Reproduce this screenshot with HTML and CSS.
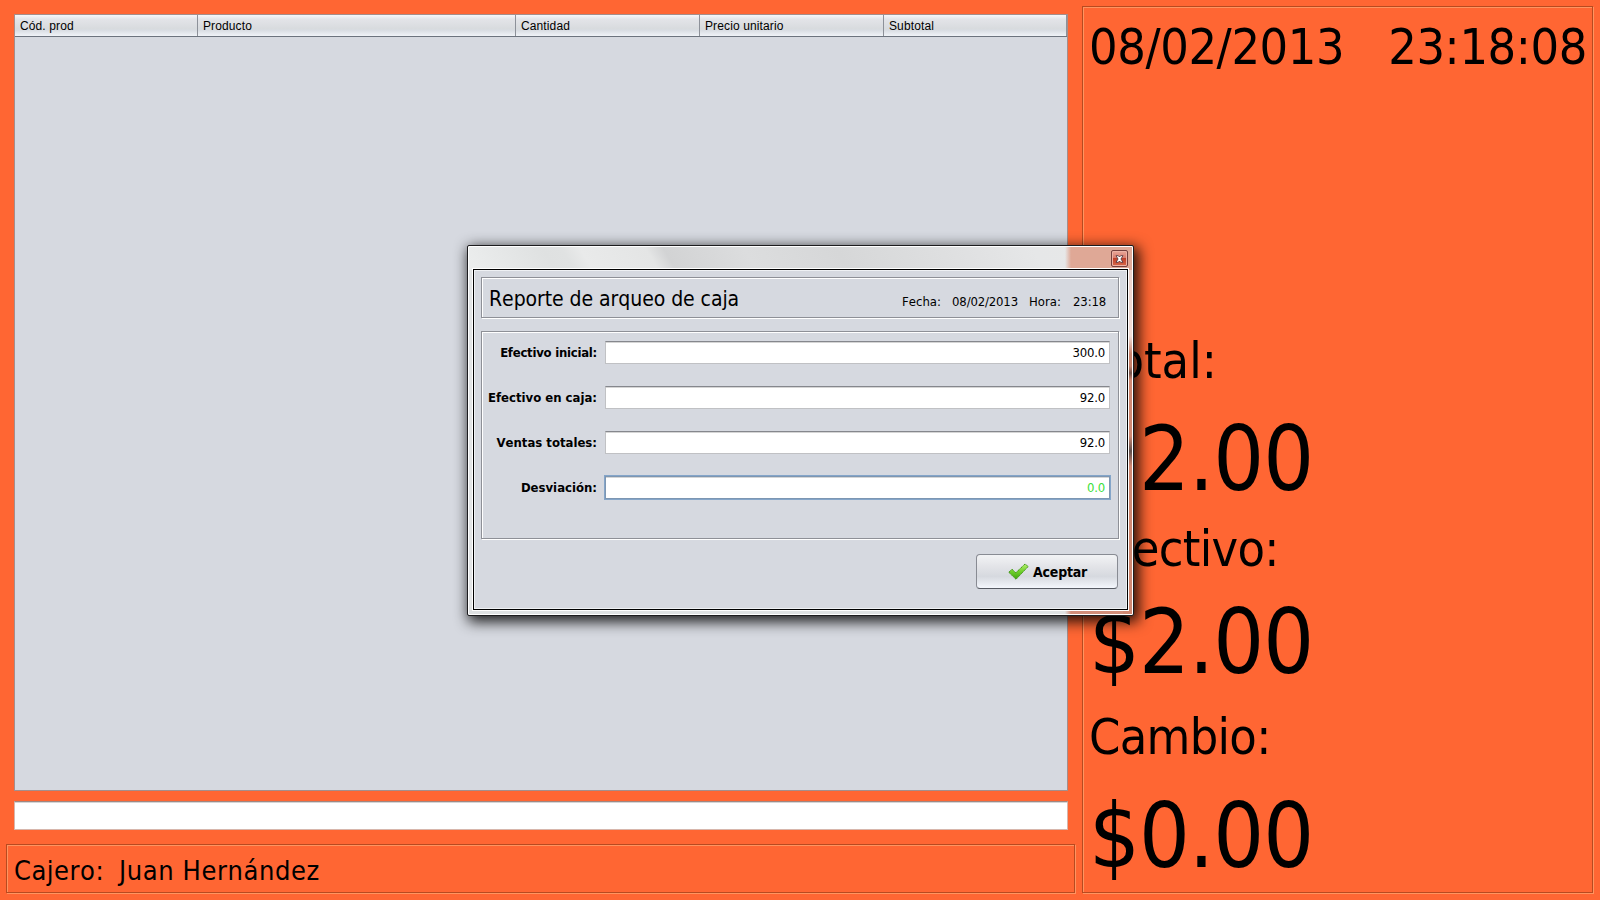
FILE: index.html
```html
<!DOCTYPE html>
<html lang="es">
<head>
<meta charset="utf-8">
<title>Caja</title>
<link rel="stylesheet" href="styles.css">
</head>
<body>
<div class="app">
  <main class="sales">
    <section class="table">
      <div class="thead">
        <span class="th">Cód. prod</span>
        <span class="th">Producto</span>
        <span class="th">Cantidad</span>
        <span class="th">Precio unitario</span>
        <span class="th">Subtotal</span>
      </div>
    </section>
    <div class="entry"></div>
    <footer class="cashier etched-orange"><span class="cashier-label">Cajero:</span><span>Juan Hernández</span></footer>
  </main>
  <aside class="totals etched-orange">
    <div class="clock"><span>08/02/2013</span><span>23:18:08</span></div>
    <div class="label label-total">Total:</div>
    <div class="amount amount-total">$2.00</div>
    <div class="label label-cash">Efectivo:</div>
    <div class="amount amount-cash">$2.00</div>
    <div class="label label-change">Cambio:</div>
    <div class="amount amount-change">$0.00</div>
  </aside>
</div>

<div class="dialog">
  <div class="titlebar">
    <span class="close"><svg width="9" height="8" viewBox="0 0 9 8"><path d="M1 .7h2.3L4.5 2 5.700 .7H8L5.900 4 8 7.300H5.700L4.500 6 3.300 7.300H1L3.100 4z" fill="#fff" stroke="#4a3038" stroke-width=".8"/></svg></span>
  </div>
  <div class="dialog-body">
    <header class="report-head etched">
      <h1 class="report-title">Reporte de arqueo de caja</h1>
      <div class="report-meta"><span class="fecha">Fecha:</span><span class="fecha-v">08/02/2013</span><span class="hora">Hora:</span><span>23:18</span></div>
    </header>
    <section class="form etched">
      <div class="row"><span class="name tight">Efectivo inicial:</span><span class="field">300.0</span></div>
      <div class="row"><span class="name">Efectivo en caja:</span><span class="field">92.0</span></div>
      <div class="row"><span class="name">Ventas totales:</span><span class="field">92.0</span></div>
      <div class="row"><span class="name">Desviación:</span><span class="field focused">0.0</span></div>
    </section>
    <div class="actions">
      <button class="accept">
        <svg width="21" height="18" viewBox="0 0 21 18"><defs><linearGradient id="g" x1="0" y1="0" x2="0" y2="1"><stop offset="0" stop-color="#b4ee6c"/><stop offset=".5" stop-color="#6fcf2c"/><stop offset="1" stop-color="#3fa30c"/></linearGradient></defs><path d="M.8 9.200 4 6.200l3.800 3.600L17 1l3.200 2.500L8 16.300z" fill="url(#g)" stroke="#3f9416" stroke-width="1" stroke-dasharray="1.500 .6"/></svg>
        <span>Aceptar</span>
      </button>
    </div>
  </div>
</div>
</body>
</html>
```
FILE: styles.css
```css
* { box-sizing: border-box; }

body {
  margin: 0;
  width: 1600px;
  height: 900px;
  overflow: hidden;
  background: #ff6633;
  color: #000;
  font-family: "DejaVu Sans Condensed", "DejaVu Sans", sans-serif;
  font-stretch: condensed;
  font-kerning: none;
}

.app {
  display: flex;
  gap: 7px;
  height: 900px;
  padding: 6px;
}

/* Two-tone engraved frames */
.etched-orange {
  border: 1px solid #b84a20;
  box-shadow: 1px 1px 0 #ff9460, inset 1px 1px 0 #ff9460;
}

.etched {
  border: 1px solid #8e9097;
  box-shadow: 1px 1px 0 #fff, inset 1px 1px 0 #fff;
}

.sales {
  display: flex;
  flex-direction: column;
  width: 1069px;
  padding-top: 8px;
}

.table {
  width: 1054px;
  height: 777px;
  margin-left: 8px;
  border: 1px solid #a48e8c;
  background: #d6d9e0;
}

.thead {
  display: grid;
  grid-template-columns: 183px 318px 184px 184px 183px;
  height: 22px;
  border-bottom: 1px solid #6c737e;
  background: linear-gradient(#f6f7f9 0, #e3e4e8 20%, #d8dbde 65%, #d8dce2 72%, #f0f3f8 100%);
  font: 12px/22px "Liberation Sans", Arial, sans-serif;
  letter-spacing: .12px;
}

.th {
  height: 21px;
  padding-left: 5px;
  border-right: 1px solid #8d9199;
}

.entry {
  width: 1054px;
  height: 29px;
  margin: 10px 0 0 8px;
  border: 1px solid #d7b6ac;
  border-top-color: #a08781;
  background: #fff;
  box-shadow: inset 0 1px 0 #d5d5d5;
}

.cashier {
  display: flex;
  height: 49px;
  margin-top: 14px;
  padding-left: 7px;
  font-size: 27px;
  line-height: 51px;
  letter-spacing: .6px;
  white-space: nowrap;
}

.cashier-label { width: 105px; letter-spacing: .5px; }

.totals {
  width: 511px;
  height: 887px;
  padding: 10px 5px 0 6px;
}

.clock {
  display: flex;
  justify-content: space-between;
  font-size: 50px;
  line-height: 60px;
  letter-spacing: -.4px;
}

.label {
  font-size: 50px;
  line-height: 60px;
  letter-spacing: -.7px;
}

.amount {
  font-size: 89px;
  line-height: 109px;
  letter-spacing: -1px;
}

.label-total { margin-top: 254px; letter-spacing: 0; }
.amount-total { margin-top: 14px; }
.label-cash { margin-top: 5px; }
.amount-cash { margin-top: 9px; }
.label-change { margin-top: 10px; }
.amount-change { margin-top: 15px; }

/* Dialog window above the sales screen */
.dialog {
  position: absolute;
  left: 467px;
  top: 245px;
  width: 667px;
  height: 371px;
  padding: 0 4px 4px 4px;
  border: 1px solid #1c1c1e;
  border-radius: 2px;
  background:
    linear-gradient(90deg, transparent 597px, #dfa896 603px) 0 0 / 100% 24px no-repeat,
    linear-gradient(60deg, #eceeee 0, #dfe1e1 75px, #e0e2e2 92px, #e9eaea 108px, #e4e5e5 165px, #d2d3d4 180px, #dcddde 250px, #d6d7d8 330px, #dfe0e1 430px, #e6e7e8 500px, #e8e8e8 100%) 0 0 / 100% 24px no-repeat,
    linear-gradient(#e8cdc5 0, #efdcd6 90px, #c9816b 108px, #c9816b 120px, #77564d 127px, #d08872 134px, #d08872 190px, #60504c 205px, #d08872 220px, #d08872 100%) 100% 0 / 10px 100% no-repeat,
    linear-gradient(90deg, #dfe2e3 0, #dfe2e3 597px, #d28e7a 603px) 0 100% / 100% 8px no-repeat,
    #e2e4e5;
  box-shadow: inset 0 0 0 1px #fff, 3px 4px 14px 2px rgba(0, 0, 0, .85);
}

.titlebar {
  display: flex;
  justify-content: flex-end;
  height: 22px;
  padding: 4px 1px 0 0;
}

.close {
  display: flex;
  align-items: center;
  justify-content: center;
  width: 17px;
  height: 17px;
  border: 1px solid #743e3d;
  border-radius: 2px;
  background: linear-gradient(#e9a89b 0, #d9796a 48%, #bd3f2b 50%, #d8694b 100%);
  box-shadow: inset 0 0 0 1px #edb1a4;
}

.dialog-body {
  display: flex;
  flex-direction: column;
  height: 343px;
  padding: 8px 9px 0 8px;
  border: 1px solid #fff;
  outline: 1px solid #000;
  outline-offset: -2px;
  background: #d6d9e0;
  box-shadow: inset 0 0 0 2px #eff1f4;
}

.report-head {
  display: flex;
  justify-content: space-between;
  flex: none;
  height: 41px;
  padding: 0 12px 0 7px;
}

.report-title {
  margin: 0;
  font-size: 21px;
  font-weight: 400;
  line-height: 42px;
  letter-spacing: -.06px;
}

.report-meta {
  display: flex;
  font-size: 13px;
  line-height: 48px;
  letter-spacing: -.15px;
}

.fecha { width: 50px; letter-spacing: 0; }
.fecha-v { width: 77px; }
.hora { width: 44px; letter-spacing: 0; }

.form {
  display: flex;
  flex-direction: column;
  gap: 22px;
  flex: none;
  height: 208px;
  margin-top: 13px;
  padding: 9px 8px 0 4px;
}

.row {
  display: grid;
  grid-template-columns: 111px 505px;
  column-gap: 8px;
  height: 23px;
  font-size: 13px;
  line-height: 23px;
}

.name {
  font-weight: 700;
  text-align: right;
  letter-spacing: 0;
  white-space: nowrap;
}

.tight { letter-spacing: -.25px; }

.field {
  padding-right: 4px;
  border: 1px solid #c0c1c4;
  border-top-color: #85878d;
  background: #fff;
  box-shadow: inset 0 1px 0 #d5d5d5;
  line-height: 22px;
  height: 23px;
  text-align: right;
  letter-spacing: -.2px;
}

.focused {
  border-color: #7d96b2;
  box-shadow: inset 0 1px 0 #d5d5d5, 0 0 0 1px #84a5c9;
  color: #3be03b;
}

.actions {
  display: flex;
  justify-content: flex-end;
  margin: 15px 1px 0 0;
}

.accept {
  display: flex;
  align-items: center;
  gap: 4px;
  width: 142px;
  height: 35px;
  padding: 0 0 0 31px;
  border: 1px solid #888b93;
  border-bottom-color: #565a63;
  border-radius: 4px;
  background: linear-gradient(#f2f3f5 0, #e3e4e8 35%, #d6d9df 65%, #f4f7fd 100%);
  color: #000;
  font: inherit;
  font-stretch: condensed;
  font-kerning: none;
  font-size: 14px;
  font-weight: 700;
  letter-spacing: -.2px;
}
```
